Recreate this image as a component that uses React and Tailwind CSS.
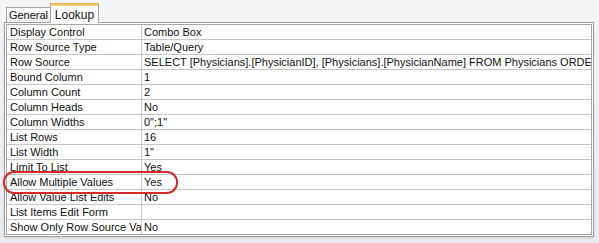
const rows = [
  ['Display Control', 'Combo Box'],
  ['Row Source Type', 'Table/Query'],
  ['Row Source', 'SELECT [Physicians].[PhysicianID], [Physicians].[PhysicianName] FROM Physicians ORDER BY [PhysicianName];'],
  ['Bound Column', '1'],
  ['Column Count', '2'],
  ['Column Heads', 'No'],
  ['Column Widths', '0";1"'],
  ['List Rows', '16'],
  ['List Width', '1"'],
  ['Limit To List', 'Yes'],
  ['Allow Multiple Values', 'Yes'],
  ['Allow Value List Edits', 'No'],
  ['List Items Edit Form', ''],
  ['Show Only Row Source Values', 'No'],
]

export default function App() {
  return (
    <div className="relative h-[243px] w-[599px] overflow-hidden bg-gradient-to-b from-[#f4f5f7] to-[#e9ebee] font-['Liberation_Sans',Arial,sans-serif] text-[11px] text-[#111]">
      <div className="flex h-[22px] items-end pl-[6px]">
        <div className="flex h-[15px] w-[44px] items-center justify-center border border-b-0 border-r-0 border-[#a9a9a9] bg-gradient-to-b from-white to-[#ececec] text-[11px] leading-none">
          General
        </div>
        <div className="relative z-10 -mb-px flex h-[20px] w-[49px] flex-col border-x border-[#a9a9a9] bg-white">
          <div className="h-[3px] bg-gradient-to-b from-[#e9a93a] to-[#fcdc8c]" />
          <div className="flex flex-1 items-center justify-center text-[12px] leading-none">Lookup</div>
        </div>
      </div>
      <div className="ml-[4px] h-[215px] w-[590px] border border-[#a2a2a2] bg-white p-px shadow-[0_1px_2px_rgba(0,0,0,0.12)]">
        <div className="h-full w-full border border-[#a8a8a8]">
          {rows.map(([label, value], i) => (
            <div
              key={label}
              className={`flex h-[15px] ${i < rows.length - 1 ? 'border-b border-[#c6c6c6]' : ''}`}
            >
              <div className="w-[135px] shrink-0 overflow-hidden whitespace-nowrap border-r border-[#c6c6c6] pl-[3px] leading-[14px]">
                {label}
              </div>
              <div className="min-w-0 flex-1 overflow-hidden whitespace-nowrap pl-[2px] leading-[14px]">
                {value}
              </div>
            </div>
          ))}
        </div>
      </div>
      <div className="absolute left-[3px] top-[171px] h-[23px] w-[175px] rounded-[11px] border-2 border-[#d42a2a]" />
    </div>
  )
}
